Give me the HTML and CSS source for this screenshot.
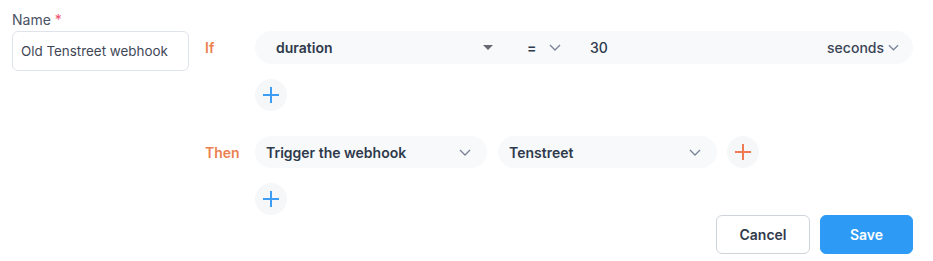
FILE: index.html
```html
<!DOCTYPE html>
<html>
<head>
<meta charset="utf-8">
<link rel="stylesheet" href="styles.css">
</head>
<body>
<div class="page">
  <div class="name-col">
    <div class="label">Name <span class="req">*</span></div>
    <div class="name-input">Old Tenstreet webhook</div>
  </div>
  <div class="rules">
    <div class="row if-row">
      <div class="kw">If</div>
      <div class="bar cond">
        <div class="field">duration</div>
        <svg class="caret" width="10" height="6" viewBox="0 0 10 6"><path d="M0 0H10L5 5Z" fill="#666a70"/></svg>
        <div class="op">=</div>
        <svg class="chev" width="12" height="7" viewBox="0 0 12 7"><path d="M1 1L6 6L11 1" fill="none" stroke="#7a8396" stroke-width="1.3"/></svg>
        <div class="val">30</div>
        <div class="unit">seconds</div>
        <svg class="chev" width="11" height="7" viewBox="0 0 12 7"><path d="M1 1L6 6L11 1" fill="none" stroke="#7a8396" stroke-width="1.3"/></svg>
      </div>
    </div>
    <div class="row add-row">
      <div class="kw"></div>
      <div class="plus blue"><svg width="16" height="16" viewBox="0 0 16 16"><path d="M8 0V16M0 8H16" stroke="#3d9cf4" stroke-width="2"/></svg></div>
    </div>
    <div class="row then-row">
      <div class="kw">Then</div>
      <div class="bar sel sel1">
        <div class="field">Trigger the webhook</div>
        <svg class="chev" width="12" height="7" viewBox="0 0 12 7"><path d="M1 1L6 6L11 1" fill="none" stroke="#7a8396" stroke-width="1.3"/></svg>
      </div>
      <div class="bar sel sel2">
        <div class="field">Tenstreet</div>
        <svg class="chev" width="12" height="7" viewBox="0 0 12 7"><path d="M1 1L6 6L11 1" fill="none" stroke="#7a8396" stroke-width="1.3"/></svg>
      </div>
      <div class="plus orange"><svg width="16" height="16" viewBox="0 0 16 16"><path d="M8 0V16M0 8H16" stroke="#ee7b56" stroke-width="2"/></svg></div>
    </div>
    <div class="row add-row2">
      <div class="kw"></div>
      <div class="plus blue"><svg width="16" height="16" viewBox="0 0 16 16"><path d="M8 0V16M0 8H16" stroke="#3d9cf4" stroke-width="2"/></svg></div>
    </div>
    <div class="actions">
      <button class="btn cancel">Cancel</button>
      <button class="btn save">Save</button>
    </div>
  </div>
</div>
</body>
</html>
```
FILE: styles.css
```css
* { box-sizing: border-box; }
html, body { margin: 0; padding: 0; background: #fff; }
body { font-family: Inter, "Noto Sans", sans-serif; color: #2f3a4b; }
.page { display: flex; padding: 11px 20px 0 12px; }
.name-col { width: 177px; flex: none; }
.label { font-size: 14px; color: #4a5263; line-height: 18px; height: 20px; }
.req { color: #f0506e; }
.name-input {
  width: 177px; height: 40px; border: 1px solid #dfe3ea; border-radius: 6px;
  font-size: 13.4px; color: #3f4756; padding: 0 8px; display: flex; align-items: center;
}
.rules { flex: 1; padding-left: 16px; padding-top: 20px; display: flex; flex-direction: column; }
.row { display: flex; align-items: center; }
.kw { width: 50px; flex: none; color: #ec7f50; font-weight: 600; font-size: 14px; }
.bar { background: #f7f9fb; border-radius: 17px; display: flex; align-items: center; font-size: 14px; font-weight: 600; color: #2f3a4b; }
.cond { height: 33px; flex: 1; padding: 0 14px 0 21px; }
.cond .field { width: 207px; }
.caret { margin-right: 34px; margin-top: 1px; }
.op { width: 8px; margin-right: 14px; font-weight: 600; }
.cond .chev { margin-right: 29px; }
.val { flex: 1; font-weight: 500; }
.unit { font-weight: 500; margin-right: 4px; color: #3a4456; }
.cond .unit + .chev { margin-right: 0; }
.add-row { margin-top: 15px; }
.then-row { margin-top: 25px; }
.add-row2 { margin-top: 15px; }
.plus { width: 32px; height: 32px; border-radius: 50%; background: #f6f7f9; display: flex; align-items: center; justify-content: center; flex: none; }
.sel { height: 32px; padding: 0 16px 0 11px; justify-content: space-between; }
.sel1 { width: 232px; }
.sel2 { width: 219px; margin-left: 11px; padding-left: 11px; padding-right: 16px; }
.then-row .plus { margin-left: 10px; }
.actions { display: flex; justify-content: flex-end; gap: 10px; margin-top: 0; }
.btn { height: 39px; border-radius: 6px; font-family: Inter, "Noto Sans", sans-serif; font-size: 14px; font-weight: 600; cursor: pointer; }
.cancel { width: 94px; background: #fff; border: 1px solid #cfd4dc; color: #2f3a4b; }
.save { width: 93px; background: #2d9bf6; border: 1px solid #2d9bf6; color: #fff; }
```
